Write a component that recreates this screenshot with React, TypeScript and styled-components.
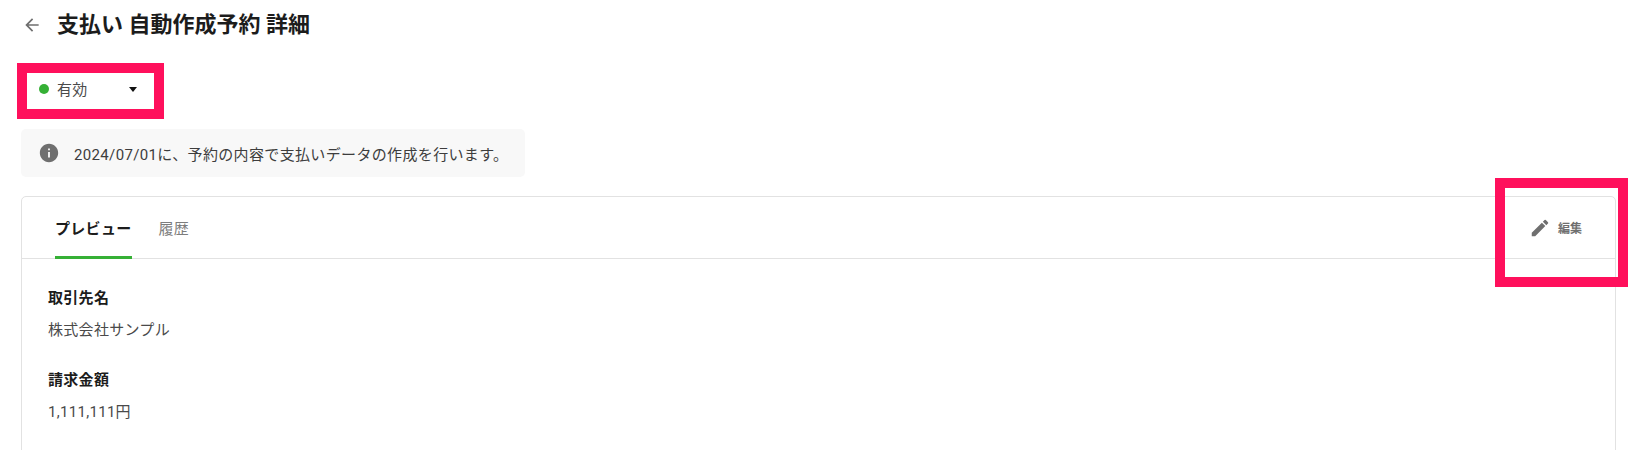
import React from "react";
import styled, { createGlobalStyle } from "styled-components";

const Global = createGlobalStyle`
  html, body { margin: 0; padding: 0; background: #fff; }
  body { font-family: Roboto, "Noto Sans CJK JP", sans-serif; color: #2b2b2b; overflow: hidden; }
`;

const Page = styled.div`
  position: relative;
  width: 1633px;
  height: 450px;
  overflow: hidden;
  padding: 0 17px 0 21px;
  box-sizing: border-box;
`;

const Header = styled.header`
  display: flex;
  align-items: center;
  height: 50px;
  gap: 15px;
`;

const BackButton = styled.span`
  display: flex;
  width: 20px;
  height: 20px;
  margin-left: 1px;
  color: #6f6f6f;
`;

const Title = styled.h1`
  margin: 0;
  font-size: 22px;
  line-height: 30px;
  font-weight: 700;
  color: #1c1c1c;
`;

const StatusSelect = styled.div`
  display: flex;
  align-items: center;
  width: 122px;
  height: 35px;
  margin: 21px 0 0 5px;
  padding-bottom: 1px;
  box-sizing: border-box;
  padding-left: 13px;
  font-size: 15px;
  letter-spacing: 0.3px;
  color: #4a4a4a;
`;

const StatusDot = styled.span`
  width: 10px;
  height: 10px;
  margin-top: 1px;
  border-radius: 50%;
  background: #35b035;
  margin-right: 8px;
`;

const Caret = styled.span`
  width: 0;
  height: 0;
  margin: 3px 0 0 41px;
  border-left: 4px solid transparent;
  border-right: 4px solid transparent;
  border-top: 5px solid #111;
`;

const Notice = styled.div`
  display: flex;
  align-items: center;
  width: 504px;
  height: 48px;
  margin-top: 23px;
  box-sizing: border-box;
  padding-left: 17px;
  gap: 14px;
  background: #f8f8f8;
  border-radius: 5px;
  font-size: 15px;
  letter-spacing: 0.35px;
  color: #3d3d3d;
`;

const Card = styled.section`
  margin-top: 19px;
  height: 300px;
  border: 1px solid #e2e2e2;
  border-radius: 5px;
`;

const TabBar = styled.div`
  display: flex;
  align-items: stretch;
  justify-content: space-between;
  height: 61px;
  border-bottom: 1px solid #e2e2e2;
  padding-left: 33px;
`;

const Tabs = styled.div`
  display: flex;
  gap: 27px;
`;

const Tab = styled.div<{ $active?: boolean }>`
  display: flex;
  align-items: center;
  font-size: 15px;
  letter-spacing: 0.3px;
  font-weight: ${(p) => (p.$active ? 700 : 400)};
  color: ${(p) => (p.$active ? "#1c1c1c" : "#7d7d7d")};
  border-bottom: 3px solid ${(p) => (p.$active ? "#35b035" : "transparent")};
  margin-bottom: -1px;
  padding-top: 1px;
  box-sizing: border-box;
`;

const EditButton = styled.div`
  display: flex;
  align-items: center;
  gap: 7px;
  padding-right: 33px;
  font-size: 12px;
  font-weight: 700;
  color: #6f6f6f;
`;

const Body = styled.div`
  padding: 23px 26px;
`;

const Field = styled.div`
  margin-bottom: 18px;
`;

const Label = styled.div`
  font-size: 15px;
  letter-spacing: 0.3px;
  line-height: 32px;
  font-weight: 700;
  color: #1c1c1c;
`;

const Value = styled.div`
  margin-top: 1px;
  font-size: 15px;
  letter-spacing: 0.3px;
  line-height: 31px;
  color: #4a4a4a;
`;

const Highlight = styled.div<{ $x: number; $y: number; $w: number; $h: number }>`
  position: absolute;
  left: ${(p) => p.$x}px;
  top: ${(p) => p.$y}px;
  width: ${(p) => p.$w}px;
  height: ${(p) => p.$h}px;
  box-sizing: border-box;
  border: 10px solid #ff105c;
  pointer-events: none;
`;

export default function App() {
  return (
    <Page>
      <Global />
      <Header>
        <BackButton>
          <svg width="20" height="20" viewBox="0 0 24 24" fill="currentColor">
            <path d="M20 11H7.83l5.59-5.59L12 4l-8 8 8 8 1.41-1.41L7.83 13H20v-2z" />
          </svg>
        </BackButton>
        <Title>支払い 自動作成予約 詳細</Title>
      </Header>
      <StatusSelect>
        <StatusDot />
        有効
        <Caret />
      </StatusSelect>
      <Notice>
        <svg width="22" height="22" viewBox="0 0 24 24" fill="#6f6f6f">
          <path d="M12 2C6.48 2 2 6.48 2 12s4.48 10 10 10 10-4.48 10-10S17.52 2 12 2zm1 15h-2v-6h2v6zm0-8h-2V7h2v2z" />
        </svg>
        2024/07/01に、予約の内容で支払いデータの作成を行います。
      </Notice>
      <Card>
        <TabBar>
          <Tabs>
            <Tab $active>プレビュー</Tab>
            <Tab>履歴</Tab>
          </Tabs>
          <EditButton>
            <svg width="22" height="22" viewBox="0 0 24 24" fill="#6f6f6f">
              <path d="M3 17.25V21h3.75L17.81 9.94l-3.75-3.75L3 17.25zM20.71 7.04a1 1 0 0 0 0-1.41l-2.34-2.34a1 1 0 0 0-1.41 0l-1.83 1.83 3.75 3.75 1.83-1.83z" />
            </svg>
            編集
          </EditButton>
        </TabBar>
        <Body>
          <Field>
            <Label>取引先名</Label>
            <Value>株式会社サンプル</Value>
          </Field>
          <Field>
            <Label>請求金額</Label>
            <Value>1,111,111円</Value>
          </Field>
        </Body>
      </Card>
      <Highlight $x={17} $y={63} $w={147} $h={56} />
      <Highlight $x={1495} $y={178} $w={133} $h={109} />
    </Page>
  );
}
